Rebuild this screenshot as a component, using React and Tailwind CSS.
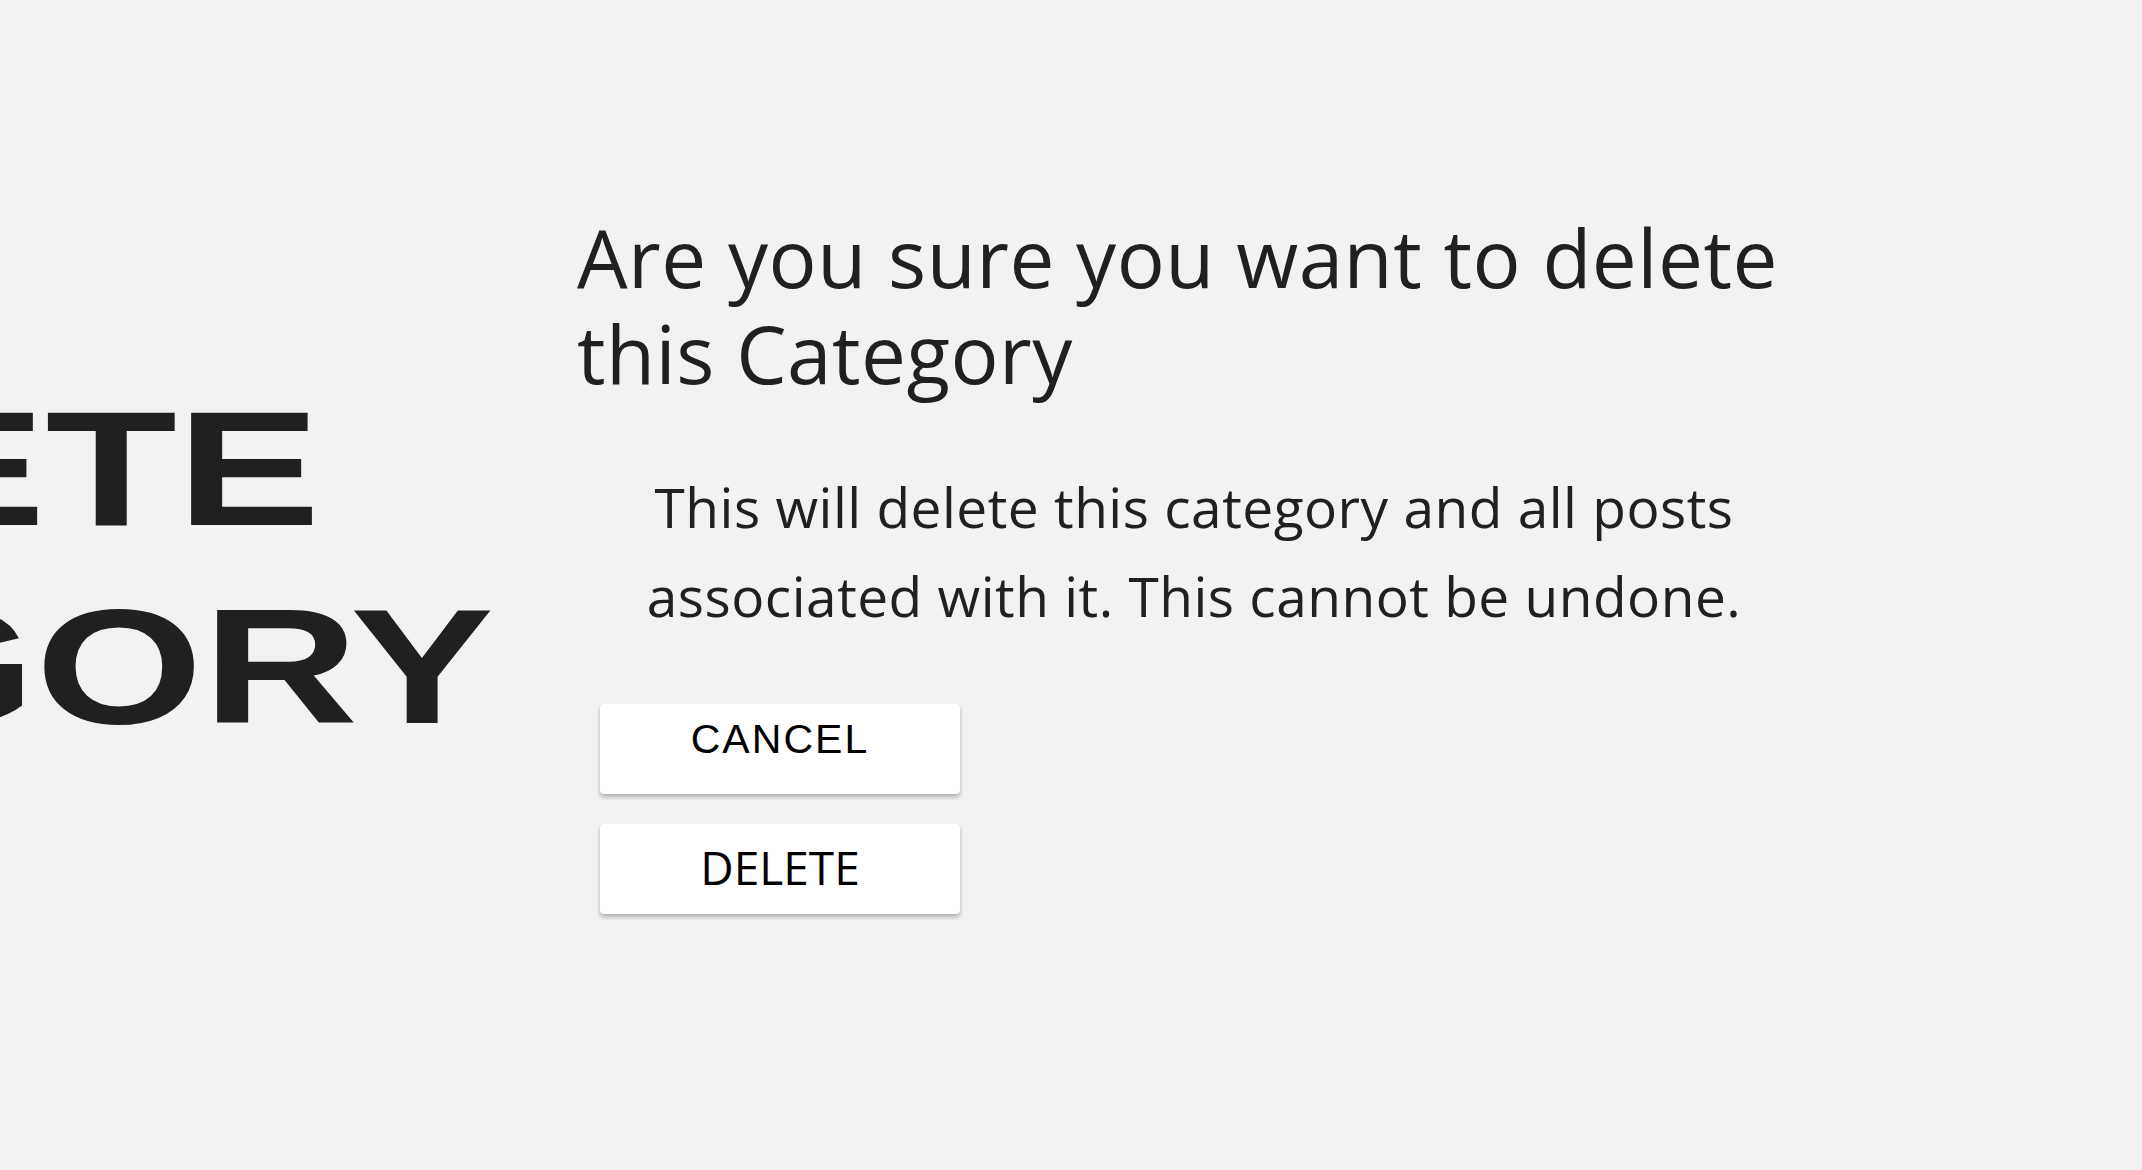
function App() {
  return (
    <div className="flex h-[1170px] w-full overflow-hidden bg-[#f2f2f2] text-[#202020]">
      {/* left title, runs off the edge */}
      <div className="w-[577px] shrink-0 pt-[370px]">
        <div className="-ml-[804px] w-[1400px] scale-x-[1.32] text-center font-['Liberation_Sans',Arial,sans-serif] text-[163px] font-bold leading-[198px]">
          <div>DELETE</div>
          <div>CATEGORY</div>
        </div>
      </div>

      {/* confirm panel */}
      <div className="flex flex-col pt-[209px]">
        <h1 className="w-[1240px] font-['Open_Sans',sans-serif] text-[80px] font-normal leading-[96px] tracking-[0.5px]">
          Are you sure you want to delete this Category
        </h1>
        <p className="mt-[61px] w-[1234px] text-center font-['Open_Sans',sans-serif] text-[55px] font-medium leading-[89px] tracking-[0.5px]">
          This will delete this category and all posts associated with it. This cannot be undone.
        </p>
        <div className="ml-[23px] mt-[64px] flex flex-col gap-[30px]">
          <button
            type="button"
            className="flex h-[90px] w-[360px] items-start justify-center rounded bg-white pt-[15px] font-['Liberation_Sans',Arial,sans-serif] text-[41px] leading-none tracking-[0.05em] text-black shadow-[0_3px_4px_rgba(0,0,0,0.28)]"
          >
            CANCEL
          </button>
          <button
            type="button"
            className="flex h-[90px] w-[360px] items-center justify-center rounded bg-white pb-[4px] font-['Open_Sans',sans-serif] text-[46px] leading-none text-black shadow-[0_3px_4px_rgba(0,0,0,0.28)]"
          >
            DELETE
          </button>
        </div>
      </div>
    </div>
  );
}

export default App;
